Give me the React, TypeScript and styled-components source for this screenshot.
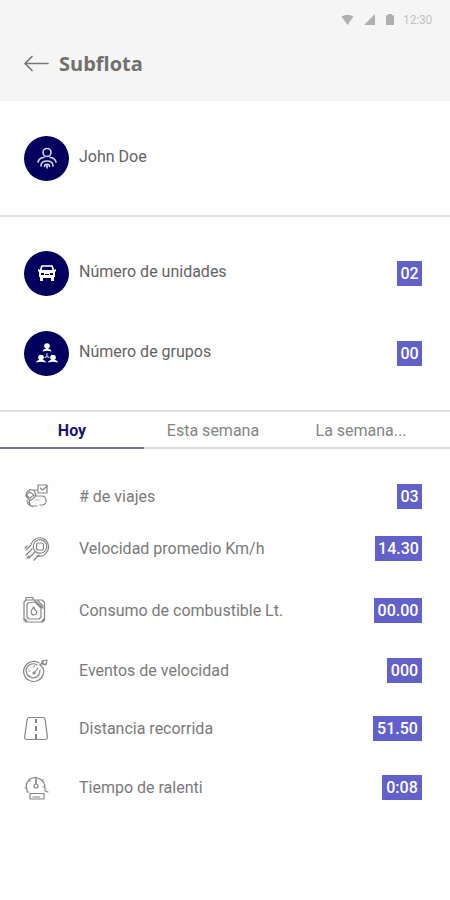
import React from "react";
import styled, { createGlobalStyle } from "styled-components";

const GlobalStyle = createGlobalStyle`
  *, *::before, *::after { box-sizing: border-box; }
  body { margin: 0; background: #fefefe; }
`;

const Screen = styled.main`
  width: 450px;
  height: 900px;
  overflow: hidden;
  background: #fefefe;
  color: #646464;
  font-family: Roboto, sans-serif;
`;

const Header = styled.header`
  height: 101px;
  background: #f5f5f5;
`;

const StatusBar = styled.div`
  height: 39px;
  padding: 0 18px 0 0;
  display: flex;
  align-items: center;
  justify-content: flex-end;
  color: #c2c2c2;
  font-size: 12px;
  letter-spacing: -0.2px;
`;

const StatusIcons = styled.svg`
  width: 56px;
  height: 14px;
  margin-right: 6px;
  fill: #b0b0b0;
`;

const TitleBar = styled.div`
  height: 49px;
  padding-left: 23px;
  display: flex;
  align-items: center;
`;

const BackArrow = styled.svg`
  width: 27px;
  height: 18px;
  margin-right: 9px;
  fill: none;
  stroke: #777;
  stroke-width: 1.7;
  stroke-linecap: round;
  stroke-linejoin: round;
`;

const Title = styled.h1`
  margin: 0;
  font: 700 20px/28px "Open Sans", sans-serif;
  color: #707070;
`;

const Section = styled.section<{ $height: number; $top: number }>`
  height: ${({ $height }) => $height}px;
  padding-top: ${({ $top }) => $top}px;
  border-bottom: 2px solid #dedede;
`;

const SummaryRow = styled.div`
  height: 80px;
  padding: 0 28px 0 24px;
  display: flex;
  align-items: center;
`;

const Avatar = styled.div`
  width: 45px;
  height: 45px;
  margin-right: 10px;
  border-radius: 50%;
  background: #02005c;
  display: flex;
  align-items: center;
  justify-content: center;
`;

const AvatarIcon = styled.svg`
  width: 24px;
  height: 24px;
  fill: none;
  stroke: #d6d6ea;
  stroke-width: 1.6;
  stroke-linecap: round;
  stroke-linejoin: round;
`;

const SummaryLabel = styled.span`
  flex: 1;
  padding-bottom: 3px;
  font-size: 16px;
  line-height: 20px;
`;

const Badge = styled.span<{ $width: number }>`
  width: ${({ $width }) => $width}px;
  height: 25px;
  background: #6260c9;
  color: #fff;
  display: flex;
  align-items: center;
  justify-content: center;
  font-size: 16px;
  font-weight: 500;
  line-height: 25px;
`;

const Tabs = styled.nav`
  height: 37px;
  display: grid;
  grid-template-columns: 144px 138px 168px;
`;

const Tab = styled.button<{ $active?: boolean; $shift?: number }>`
  border: 0;
  border-bottom: 2px solid ${({ $active }) => ($active ? "#77739f" : "#dadada")};
  padding: 2px ${({ $shift = 0 }) => $shift}px 0 0;
  background: transparent;
  font-family: Roboto, sans-serif;
  font-size: 16px;
  font-weight: ${({ $active }) => ($active ? 700 : 400)};
  color: ${({ $active }) => ($active ? "#1a1668" : "#858585")};
`;

const StatList = styled.div`
  padding-top: 24px;
`;

const StatRow = styled.div<{ $gap: number }>`
  height: 46px;
  margin-top: ${({ $gap }) => $gap}px;
  padding: 0 28px 0 22px;
  display: flex;
  align-items: center;
`;

const StatIcon = styled.svg`
  width: 28px;
  height: 30px;
  margin-right: 29px;
  fill: none;
  stroke: #858585;
  stroke-width: 1.2;
  stroke-linecap: round;
  stroke-linejoin: round;
`;

const StatLabel = styled.span`
  flex: 1;
  padding-top: 2px;
  font-size: 16px;
  line-height: 20px;
  color: #7a7a7a;
`;

const TripIcon = () => (
  <StatIcon viewBox="0 0 28 30">
    <path d="M16 4h9v8h-9zM18.5 7l2 2 5-4M11 9h4M5 11l3-2.5 4 1 2 4-2.5 4-3.5 2-4-4.5z" />
    <path d="M4 14l4-3 4 3-4 3zM7 20l1 4 3 2M13 15h7a4 4 0 0 1 4 4 4 4 0 0 1-4 5h-2M15 25h-5c-3 0-5-3-5-6" strokeDasharray="3 1" />
    <path d="M13 19h5" stroke="#c5c5c5" />
  </StatIcon>
);

const SpeedIcon = () => (
  <StatIcon viewBox="0 0 28 30">
    <path d="M9 11c2-5 8-8 13-5 5 3 6 10 2 14-2 3-6 4-9 3" />
    <circle cx="18" cy="13.5" r="6.7" strokeDasharray="3 .7" />
    <rect x="14.5" y="10" width="7" height="7" rx="2" />
    <path d="M9 12l-5 5M10 16l-6 6M13 19l-6 6M17 22l-5 5M5 13l-2 2M7 23l-2 2" />
  </StatIcon>
);

const FuelIcon = () => (
  <StatIcon viewBox="0 0 28 30">
    <path d="M4 5h16l2.500 2.500V25l-2 2H4l-2-2V7zM4 5V2.500h7V5M6 8l7-1 6 6v9l-2 2H7l-2-2V10zM13 6l8 7M16 6l5 5" />
    <path d="M11 13c-3 3-2 7 1 7s4-4 1-5l-1-3z" />
    <path d="M3 24l2 2M20 26l2-2" />
  </StatIcon>
);

const EventIcon = () => (
  <StatIcon viewBox="0 0 28 30">
    <path d="M17 8A10 10 0 1 0 21 20c2-4 0-8-3-10M15 10a7 7 0 1 0 3 5M12 18l4-5M7 16h1M12 11v1M7 21h1M17 20h-1" />
    <path d="M20 6l5-1-1 5-4-1zM18 10l2-2M21 6v3h3" />
    <circle cx="12" cy="18" r="1" />
  </StatIcon>
);

const DistanceIcon = () => (
  <StatIcon viewBox="0 0 28 30">
    <path d="M7 4.500h14c2 0 2 1 2.300 3l2 16c.2 2-.4 3-2.400 3H5c-2 0-2.600-1-2.300-3L5 7.500c.2-2 .4-3 2-3z" />
    <path d="M14 6v4M14 13v5M14 21v5" stroke="#666" strokeWidth="1.6" strokeLinecap="butt" />
  </StatIcon>
);

const IdleIcon = () => (
  <StatIcon viewBox="0 0 28 30">
    <path d="M5 20v-2a10 10 0 0 1 3-11 10 10 0 0 1 15 9v3l3 1M5 16H3M14 5v6M7 8l1 1M21 8l-1 1M23 15h-2M5 20h2" />
    <circle cx="14" cy="14" r="2" />
    <path d="M8 21.500h14V27H8zM11 25h7M14 7v5" />
  </StatIcon>
);

const stats = [
  { label: "# de viajes", value: "03", width: 25, gap: 0, Icon: TripIcon },
  { label: "Velocidad promedio Km/h", value: "14.30", width: 47, gap: 6, Icon: SpeedIcon },
  { label: "Consumo de combustible Lt.", value: "00.00", width: 48, gap: 16, Icon: FuelIcon },
  { label: "Eventos de velocidad", value: "000", width: 35, gap: 14, Icon: EventIcon },
  { label: "Distancia recorrida", value: "51.50", width: 49, gap: 12, Icon: DistanceIcon },
  { label: "Tiempo de ralenti", value: "0:08", width: 40, gap: 13, Icon: IdleIcon },
];

export default function App() {
  return (
    <>
      <GlobalStyle />
      <Screen>
        <Header>
          <StatusBar>
            <StatusIcons viewBox="0 0 56 14">
              <path d="M.5 3.500Q6.500-.2 12.500 3.500L6.500 12zM34 1v11H23zM47 1h4v1.300h2V12h-8V2.300h2z" />
            </StatusIcons>
            12:30
          </StatusBar>
          <TitleBar>
            <BackArrow viewBox="0 0 27 18">
              <path d="M25 8.500H2M9 1.500l-7 7 7 7" />
            </BackArrow>
            <Title>Subflota</Title>
          </TitleBar>
        </Header>

        <Section $height={116} $top={17}>
          <SummaryRow>
            <Avatar>
              <AvatarIcon viewBox="0 0 24 24">
                <circle cx="12" cy="6.500" r="4" />
                <path d="M3 16c1-3 3-4.500 6-4.500M21 16c-1-3-3-4.500-6-4.500M6 20c0-3 2-5 6-5s6 2 6 5M9.500 20.500c0-3 5-3 5 0M12 19v3" />
              </AvatarIcon>
            </Avatar>
            <SummaryLabel>John Doe</SummaryLabel>
          </SummaryRow>
        </Section>

        <Section $height={195} $top={16}>
          <SummaryRow>
            <Avatar>
              <AvatarIcon viewBox="0 0 24 24">
                <path d="M6.800 5h10.400l1.300 5h-13z" stroke="#fff" strokeWidth="1.700" />
                <path fill="#fff" stroke="none" fillRule="evenodd" d="M5 9h14l2-1v2l-1 1v5h-1v4h-3v-3H8v3H5v-4H4v-5L3 10V8zM6 12v2h3v-2zm9 0v2h3v-2zm-5 1v1h4v-1z" />
              </AvatarIcon>
            </Avatar>
            <SummaryLabel>Número de unidades</SummaryLabel>
            <Badge $width={25}>02</Badge>
          </SummaryRow>
          <SummaryRow>
            <Avatar>
              <AvatarIcon viewBox="0 0 24 24">
                <g fill="#fff" stroke="none">
                  <circle cx="12" cy="5" r="2.800" />
                  <path d="M7.500 10.500c.5-2 2-2.300 3.500-2.800V6h2v1.700c1.500.5 3 .8 3.500 2.800l-4.500-.8z" />
                  <circle cx="6" cy="16.500" r="2.800" />
                  <path d="M1 21.500c.5-2 2.500-2.300 4-2.800v-1h2v1c1.500.5 3.500.8 4 2.800L6 20.700z" />
                  <circle cx="18" cy="16.500" r="2.800" />
                  <path d="M13 21.500c.5-2 2.500-2.300 4-2.800v-1h2v1c1.500.5 3.500.8 4 2.800l-5-.8z" />
                </g>
                <path d="M12 12.500v3M12 15.500l-2 1M12 15.500l2 1" strokeWidth="1.100" />
              </AvatarIcon>
            </Avatar>
            <SummaryLabel>Número de grupos</SummaryLabel>
            <Badge $width={25}>00</Badge>
          </SummaryRow>
        </Section>

        <Tabs>
          <Tab $active>Hoy</Tab>
          <Tab>Esta semana</Tab>
          <Tab $shift={10}>La semana...</Tab>
        </Tabs>

        <StatList>
          {stats.map(({ label, value, width, gap, Icon }) => (
            <StatRow key={label} $gap={gap}>
              <Icon />
              <StatLabel>{label}</StatLabel>
              <Badge $width={width}>{value}</Badge>
            </StatRow>
          ))}
        </StatList>
      </Screen>
    </>
  );
}
